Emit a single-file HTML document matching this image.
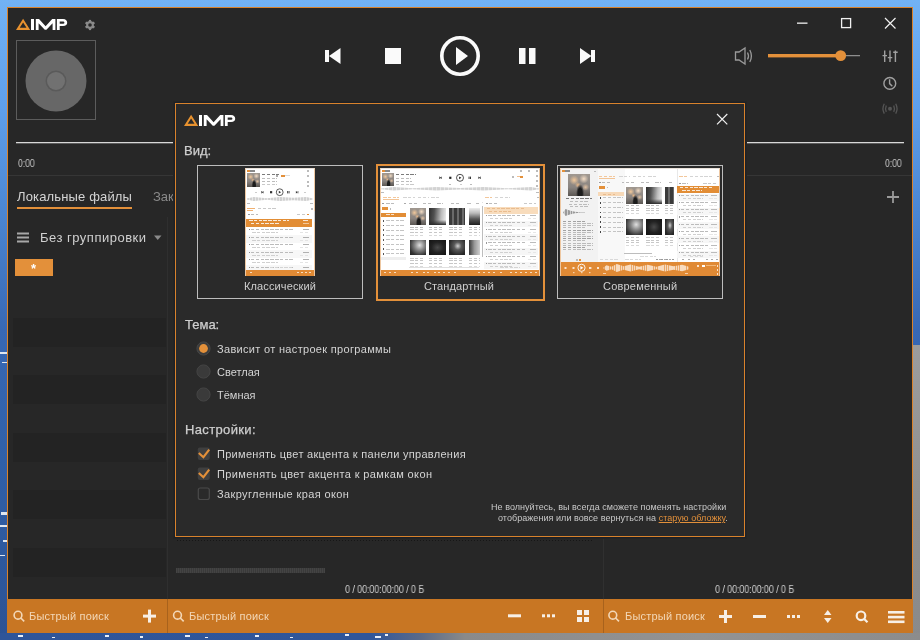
<!DOCTYPE html>
<html><head><meta charset="utf-8">
<style>
*{margin:0;padding:0;box-sizing:border-box}
html,body{width:920px;height:640px;overflow:hidden}
body{position:relative;font-family:"Liberation Sans",sans-serif;background:#4d87d6}
.a{position:absolute}
#bg{left:0;top:0;width:920px;height:640px;background:linear-gradient(180deg,#72b2f4 0px,#5e9eea 110px,#4882ce 230px,#3868b4 330px,#3060a8 460px,#2c5294 640px)}
#bgr{left:913px;top:345px;width:7px;height:295px;background:linear-gradient(180deg,#9c9c9c 0%,#8e8e8e 60%,#8a8a8a 100%)}
#bgb{left:0;top:633px;width:920px;height:7px;background:linear-gradient(90deg,#2f5599 0,#30569a 370px,#5a6a8a 420px,#8a8a8a 465px,#939393 700px,#8c8c8c 920px)}
#win{left:7px;top:7px;width:906px;height:626px;background:#272727;border:1px solid #d9822b}
.t{color:#d2d2d2;white-space:nowrap;position:absolute;will-change:transform}
.h{-webkit-text-stroke:0.25px currentColor}
</style></head><body>
<div class="a" id="bg"></div>
<div class="a" id="bgr"></div>
<div class="a" id="bgb"></div>
<svg class="a" style="left:0;top:0" width="7" height="640" fill="#dfe6f0"><rect x="0" y="352" width="7" height="2"/><rect x="2" y="362" width="5" height="1"/><rect x="1" y="512" width="6" height="3"/><rect x="0" y="525" width="7" height="2"/><rect x="3" y="540" width="4" height="2"/><rect x="0" y="555" width="5" height="1"/></svg>
<svg class="a" style="left:0;top:633px" width="920" height="7" fill="#e8eef8"><rect x="18" y="2" width="5" height="2"/><rect x="52" y="4" width="3" height="1"/><rect x="105" y="2" width="4" height="2"/><rect x="140" y="3" width="3" height="2"/><rect x="185" y="2" width="5" height="2"/><rect x="205" y="4" width="3" height="1"/><rect x="255" y="2" width="4" height="2"/><rect x="290" y="4" width="3" height="1"/><rect x="345" y="1" width="4" height="2"/><rect x="375" y="3" width="6" height="2"/><rect x="385" y="1" width="3" height="2"/></svg>
<div class="a" id="win"></div>

<!-- top-left logo -->
<svg class="a" style="left:0;top:0" width="920" height="640" viewBox="0 0 920 640">
  <!-- logo -->
  <path d="M16 30 L23.1 18.7 L30.2 30 Z M19.7 27.8 L26.5 27.8 L23.1 22.6 Z" fill="#e8922f" fill-rule="evenodd"/>
  <rect x="31" y="19" width="3" height="11" fill="#fff"/>
  <path d="M35.8 30 V19 H39 L45.6 26.2 L52.2 19 H55.4 V30 H52.6 V23.2 L46.4 29.8 H44.8 L38.6 23.2 V30 Z" fill="#fff"/>
  <path d="M56.9 30 V19 H63 C66 19 67.2 20.8 67.2 22.8 C67.2 24.8 66 26 63 26 H59.7 V30 Z M59.7 21.6 V23.8 H62.6 C63.9 23.8 64.4 23.4 64.4 22.7 C64.4 22 63.9 21.6 62.6 21.6 Z" fill="#fff" fill-rule="evenodd"/>
  <!-- gear -->
  <g transform="translate(90 25)" fill="#8a8a8a">
    <circle r="3.9"/>
    <rect x="-1.1" y="-5.1" width="2.2" height="10.2"/><rect x="-1.1" y="-5.1" width="2.2" height="10.2" transform="rotate(60)"/><rect x="-1.1" y="-5.1" width="2.2" height="10.2" transform="rotate(120)"/>
    <circle r="1.8" fill="#262626"/>
  </g>
  <!-- album art -->
  <rect x="16.5" y="40.5" width="79" height="79" fill="none" stroke="#5c5c5c" stroke-width="1"/>
  <circle cx="56" cy="81" r="30.5" fill="#676767"/>
  <circle cx="56" cy="81" r="10.5" fill="#5a5a5a"/>
  <circle cx="56" cy="81" r="9" fill="#717171"/>
  <!-- transport -->
  <rect x="325" y="50" width="4" height="12" fill="#fafafa"/>
  <path d="M340.5 48 V64 L329 56 Z" fill="#fafafa"/>
  <rect x="385" y="48" width="16" height="16" fill="#fafafa"/>
  <circle cx="460" cy="56" r="18.2" fill="none" stroke="#fafafa" stroke-width="3.6"/>
  <path d="M456 47 V65 L468 56 Z" fill="#fafafa"/>
  <rect x="519" y="48" width="6.5" height="16" fill="#fafafa"/>
  <rect x="529" y="48" width="6.5" height="16" fill="#fafafa"/>
  <path d="M580 48 V64 L591.5 56 Z" fill="#fafafa"/>
  <rect x="591" y="50" width="4" height="12" fill="#fafafa"/>
  <!-- window controls -->
  <rect x="797" y="22.5" width="10.5" height="1.3" fill="#f0f0f0"/>
  <rect x="841.6" y="18.6" width="9" height="9" fill="none" stroke="#f0f0f0" stroke-width="1.3"/>
  <path d="M885 18 L895.5 28.5 M895.5 18 L885 28.5" stroke="#f0f0f0" stroke-width="1.2"/>
  <!-- volume -->
  <path d="M735.5 52 H739 L745 48 V64 L739 60 H735.5 Z" fill="none" stroke="#9a9a9a" stroke-width="1.3"/>
  <path d="M747.5 52.5 Q749.5 56 747.5 59.5 M749.8 50 Q753 56 749.8 62" fill="none" stroke="#9a9a9a" stroke-width="1.3"/>
  <rect x="768" y="54" width="73" height="3.4" fill="#e3903a"/>
  <rect x="841" y="55.2" width="19" height="1" fill="#a8a8a8"/>
  <circle cx="840.7" cy="55.6" r="5.4" fill="#e3903a"/>
  <!-- right icons -->
  <g stroke="#a0a0a0" stroke-width="1.4" fill="none">
    <path d="M884.7 50.5 V62 M890 50.5 V62 M895.4 50.5 V62"/>
    <path d="M882.5 55.6 H887 M887.8 57.6 H892.3 M893.2 52.2 H897.7"/>
    <circle cx="889.8" cy="83.4" r="5.9"/>
    <path d="M889.6 79.3 V83.6 L892.3 86.2"/>
  </g>
  <g stroke="#555" stroke-width="1.3" fill="none">
    <path d="M886.3 105.5 Q884.8 108.7 886.3 111.9 M893.7 105.5 Q895.2 108.7 893.7 111.9"/>
    <path d="M884.3 103.8 Q881.6 108.7 884.3 113.6 M895.7 103.8 Q898.4 108.7 895.7 113.6"/>
  </g>
  <circle cx="890" cy="108.7" r="2" fill="#555"/>
  <!-- seek line -->
  <rect x="16" y="142" width="888" height="1.3" fill="#d8d8d8"/>
  <rect x="8" y="175" width="904" height="1" fill="#363636"/>
</svg>
<div class="t" style="left:18px;top:156.5px;font-size:10.5px;color:#c8c8c8;transform:scaleX(0.82);transform-origin:0 0">0:00</div>
<div class="t" style="left:884.5px;top:156.5px;font-size:10.5px;color:#c8c8c8;transform:scaleX(0.82);transform-origin:0 0">0:00</div>

<!-- main lower area -->
<div class="t" style="left:17px;top:189px;font-size:13px;letter-spacing:0.15px;color:#d4d4d4">Локальные файлы</div>
<div class="a" style="left:17px;top:207px;width:115px;height:2px;background:#e3903a"></div>
<div class="t" style="left:152.5px;top:189px;font-size:13px;color:#8a8a8a">Закладки</div>
<div class="a" style="left:13px;top:288.5px;width:153px;height:310.5px;background:repeating-linear-gradient(180deg,#272727 0px,#272727 28.5px,#232323 28.5px,#232323 57.5px)"></div>
<div class="a" style="left:167px;top:217px;width:1px;height:382px;background:#2f2f2f"></div>
<div class="a" style="left:603px;top:176px;width:1px;height:423px;background:#303030"></div>
<svg class="a" style="left:0;top:0" width="920" height="640">
  <rect x="17" y="232.5" width="12" height="2" fill="#a8a8a8"/>
  <rect x="17" y="236.5" width="12" height="2" fill="#a8a8a8"/>
  <rect x="17" y="240.5" width="12" height="2" fill="#a8a8a8"/>
  <path d="M154 235.5 H161.5 L157.75 240 Z" fill="#8a8a8a"/>
  <path d="M893 191 V203 M887 197 H899" stroke="#9a9a9a" stroke-width="1.8"/>
</svg>
<div class="t" style="left:39.5px;top:230px;font-size:13px;letter-spacing:0.5px;color:#d0d0d0">Без группировки</div>
<div class="a" style="left:15px;top:259px;width:38px;height:17px;background:#e3903a"></div>
<div class="t" style="left:31.3px;top:261px;font-size:13px;color:#fff;font-weight:bold">*</div>
<!-- dotted and progress -->
<div class="a" style="left:177px;top:540px;width:415px;height:1px;background:repeating-linear-gradient(90deg,#161616 0 1px,transparent 1px 3px)"></div>
<div class="a" style="left:176px;top:568px;width:149px;height:5px;background:repeating-linear-gradient(90deg,#444 0 1px,#3a3a3a 1px 2px)"></div>
<div class="t" style="left:345px;top:584px;font-size:10px;letter-spacing:-0.1px;color:#cfcfcf;transform:scaleX(0.9);transform-origin:0 0">0 / 00:00:00:00 / 0 Б</div>
<div class="t" style="left:715px;top:584px;font-size:10px;letter-spacing:-0.1px;color:#cfcfcf;transform:scaleX(0.9);transform-origin:0 0">0 / 00:00:00:00 / 0 Б</div>
<!-- bottom bar -->
<div class="a" style="left:7px;top:599px;width:906px;height:34px;background:#c87623"></div>
<div class="a" style="left:167px;top:599px;width:1px;height:34px;background:#a8621c"></div>
<div class="a" style="left:603px;top:599px;width:1px;height:34px;background:#a8621c"></div>
<div class="t" style="left:29.3px;top:609.5px;font-size:11px;letter-spacing:0.2px;color:#f3d8b8">Быстрый поиск</div>
<div class="t" style="left:189px;top:609.5px;font-size:11px;letter-spacing:0.2px;color:#f3d8b8">Быстрый поиск</div>
<div class="t" style="left:624.5px;top:609.5px;font-size:11px;letter-spacing:0.2px;color:#f3d8b8">Быстрый поиск</div>
<svg class="a" style="left:0;top:0" width="920" height="640">
  <g fill="none" stroke="#f3d8b8" stroke-width="1.6">
    <circle cx="18" cy="615.2" r="3.9"/><path d="M20.8 618 L24.2 621.4"/>
    <circle cx="177.5" cy="615.2" r="3.9"/><path d="M180.3 618 L183.7 621.4"/>
    <circle cx="612.8" cy="615.2" r="3.9"/><path d="M615.6 618 L619 621.4"/>
  </g>
  <g fill="#f7efe6">
    <rect x="143" y="614.6" width="13" height="3"/><rect x="148" y="609.6" width="3" height="13"/>
    <rect x="508" y="614.3" width="13" height="3"/>
    <rect x="542" y="614.3" width="3" height="3"/><rect x="547" y="614.3" width="3" height="3"/><rect x="552" y="614.3" width="3" height="3"/>
    <rect x="577" y="610" width="5" height="5"/><rect x="584" y="610" width="5" height="5"/><rect x="577" y="617" width="5" height="5"/><rect x="584" y="617" width="5" height="5"/>
    <rect x="719" y="615" width="13" height="3"/><rect x="724" y="610" width="3" height="13"/>
    <rect x="753" y="615" width="13" height="3"/>
    <rect x="787" y="615" width="3" height="3"/><rect x="792" y="615" width="3" height="3"/><rect x="797" y="615" width="3" height="3"/>
    <path d="M824 615 L827.75 610 L831.5 615 Z M824 618 L827.75 623 L831.5 618 Z"/>
    <rect x="888" y="611" width="16.5" height="2.6"/><rect x="888" y="615.8" width="16.5" height="2.6"/><rect x="888" y="620.5" width="16.5" height="2.6"/>
  </g>
  <g fill="none" stroke="#f7efe6" stroke-width="2.2">
    <circle cx="861" cy="615.8" r="4.3"/><path d="M864.2 619 L867.5 622.3"/>
  </g>
</svg>

<!-- marks under dialog top -->
<div class="a" style="left:386px;top:101.5px;width:2px;height:1.5px;background:#8a9099"></div>
<div class="a" style="left:389px;top:102px;width:8px;height:1px;background:#5a5f66"></div>
<div class="a" style="left:396.5px;top:101px;width:2.5px;height:2px;background:#9aa0a8"></div>
<div class="a" style="left:521px;top:102px;width:2px;height:1px;background:#8a9099"></div>
<div class="a" style="left:529px;top:102px;width:4px;height:1px;background:#c0c4ca"></div>
<!-- dialog -->
<div class="a" style="left:173px;top:101px;width:574px;height:438px;background:#242424"></div>
<div class="a" style="left:174px;top:102px;width:572px;height:436px;background:#1c2027"></div>
<div class="a" id="dlg" style="left:175px;top:103px;width:570px;height:434px;background:#2a2a2a;border:1px solid #d9822b"></div>
<svg class="a" style="left:0;top:0" width="920" height="640">
  <g transform="translate(168 96)">
  <path d="M16 30 L23.1 18.7 L30.2 30 Z M19.7 27.8 L26.5 27.8 L23.1 22.6 Z" fill="#e8922f" fill-rule="evenodd"/>
  <rect x="31" y="19" width="3" height="11" fill="#fff"/>
  <path d="M35.8 30 V19 H39 L45.6 26.2 L52.2 19 H55.4 V30 H52.6 V23.2 L46.4 29.8 H44.8 L38.6 23.2 V30 Z" fill="#fff"/>
  <path d="M56.9 30 V19 H63 C66 19 67.2 20.8 67.2 22.8 C67.2 24.8 66 26 63 26 H59.7 V30 Z M59.7 21.6 V23.8 H62.6 C63.9 23.8 64.4 23.4 64.4 22.7 C64.4 22 63.9 21.6 62.6 21.6 Z" fill="#fff" fill-rule="evenodd"/>
  </g>
  <path d="M717 114 L727.3 124.3 M727.3 114 L717 124.3" stroke="#f0f0f0" stroke-width="1.2"/>
  <!-- view boxes -->
  <rect x="197.5" y="165.5" width="165" height="133" fill="none" stroke="#bdbdbd" stroke-width="1"/>
  <rect x="377" y="165" width="167" height="135" fill="none" stroke="#e3903a" stroke-width="2"/>
  <rect x="557.5" y="165.5" width="165" height="133" fill="none" stroke="#bdbdbd" stroke-width="1"/>
</svg>
<!--THUMBS--><div class="a" style="left:245px;top:168px;width:70px;height:108px;background:#fff;border:1px solid #eec8a2;border-top-color:#e8e0d8"></div><div class="a" style="left:247px;top:170px;width:3px;height:2px;background:#e3903a;"></div><div class="a" style="left:250px;top:170.2px;width:5px;height:1.6px;background:#8a8a8a;"></div><div class="a" style="left:307px;top:169.5px;width:2px;height:2px;background:#bbb;"></div><div class="a" style="left:246.8px;top:172.6px;width:13.7px;height:14px;background:radial-gradient(ellipse 18% 42% at 55% 88%,#1c1c1c 0,#1c1c1c 55%,transparent 100%),radial-gradient(circle at 28% 28%,#f2c89a 0,transparent 22%),radial-gradient(circle at 72% 22%,#f3dcc4 0,transparent 20%),radial-gradient(circle at 45% 50%,#e8b888 0,transparent 18%),radial-gradient(circle at 80% 60%,#e0c0a0 0,transparent 16%),linear-gradient(180deg,#a09890 0,#8a8480 60%,#5a5652 100%);"></div><div class="a" style="left:262px;top:174px;width:17px;height:1.3px;background:repeating-linear-gradient(90deg,#7a7a7a 0 3.5px,transparent 3.5px 4.8px);"></div><div class="a" style="left:262px;top:178px;width:15px;height:1px;background:repeating-linear-gradient(90deg,#bcbcbc 0 3.5px,transparent 3.5px 4.8px);"></div><div class="a" style="left:262px;top:181px;width:15px;height:1px;background:repeating-linear-gradient(90deg,#bcbcbc 0 3.5px,transparent 3.5px 4.8px);"></div><div class="a" style="left:262px;top:184px;width:15px;height:1px;background:repeating-linear-gradient(90deg,#c9c9c9 0 3.5px,transparent 3.5px 4.8px);"></div><div class="a" style="left:276px;top:174.5px;width:2px;height:2px;background:#aaa;"></div><div class="a" style="left:281px;top:175px;width:4px;height:1.5px;background:#e3903a;"></div><div class="a" style="left:285px;top:175px;width:5px;height:1px;background:#ddd;"></div><div class="a" style="left:307px;top:174.5px;width:2px;height:2px;background:#bbb;"></div><div class="a" style="left:307px;top:180.5px;width:2px;height:2px;background:#bbb;"></div><div class="a" style="left:307px;top:184.5px;width:2px;height:2px;background:#bbb;"></div><svg class="a" style="left:0;top:0" width="920" height="640"><circle cx="279.7" cy="192.2" r="3.4" fill="none" stroke="#333" stroke-width="0.8"/><path d="M278.8 190.79999999999998 V193.6 L281.09999999999997 192.2Z" fill="#333"/><path d="M263.5 191.0 V193.39999999999998 L261.7 192.2Z" fill="#333"/><rect x="261.2" y="191.0" width="0.6" height="2.4" fill="#333"/><rect x="269.99999999999994" y="191.1" width="2.2" height="2.2" fill="#333"/><rect x="287.2" y="191.0" width="0.9" height="2.4" fill="#333"/><rect x="288.6" y="191.0" width="0.9" height="2.4" fill="#333"/><path d="M295.9 191.0 V193.39999999999998 L297.7 192.2Z" fill="#333"/><rect x="297.7" y="191.0" width="0.6" height="2.4" fill="#333"/></svg><div class="a" style="left:255px;top:191.5px;width:1.5px;height:1.5px;background:#ccc;"></div><div class="a" style="left:304px;top:191.5px;width:1.5px;height:1.5px;background:#ccc;"></div><div class="a" style="left:247px;top:197px;width:66px;height:4px;background:repeating-linear-gradient(90deg,#d0d0d0 0 2px,#e8e8e8 2px 3px);clip-path:polygon(0 40%,10% 0,30% 30%,50% 0,70% 20%,90% 0,100% 40%,100% 60%,90% 100%,70% 80%,50% 100%,30% 70%,10% 100%,0 60%)"></div><div class="a" style="left:247px;top:203px;width:3px;height:1px;background:#bbb;"></div><div class="a" style="left:310px;top:203px;width:3px;height:1px;background:#bbb;"></div><div class="a" style="left:247px;top:207.5px;width:8px;height:1px;background:#f0b070;"></div><div class="a" style="left:247px;top:209.5px;width:6px;height:1px;background:#f0b070;"></div><div class="a" style="left:258px;top:208px;width:18px;height:1px;background:repeating-linear-gradient(90deg,#c9c9c9 0 3.5px,transparent 3.5px 4.8px);"></div><div class="a" style="left:311px;top:208px;width:2px;height:1.5px;background:#bbb;"></div><div class="a" style="left:248px;top:213.5px;width:2px;height:1.5px;background:#999;"></div><div class="a" style="left:251px;top:213.5px;width:7px;height:1px;background:repeating-linear-gradient(90deg,#bcbcbc 0 3.5px,transparent 3.5px 4.8px);"></div><div class="a" style="left:297px;top:213.5px;width:10px;height:1px;background:repeating-linear-gradient(90deg,#c9c9c9 0 3.5px,transparent 3.5px 4.8px);"></div><div class="a" style="left:307px;top:213.5px;width:2px;height:1px;background:#e3903a;"></div><div class="a" style="left:246px;top:218.5px;width:66px;height:8.2px;background:#e28d35;"></div><div class="a" style="left:249px;top:220px;width:40px;height:1px;background:repeating-linear-gradient(90deg,#f9ebdd 0 3.5px,transparent 3.5px 4.8px);"></div><div class="a" style="left:251px;top:223px;width:28px;height:1px;background:repeating-linear-gradient(90deg,#f9ebdd 0 3.5px,transparent 3.5px 4.8px);"></div><div class="a" style="left:303px;top:220px;width:5px;height:1px;background:#f8e6d4;"></div><div class="a" style="left:303px;top:223px;width:6px;height:1px;background:#f5c898;"></div><div class="a" style="left:248.5px;top:229.0px;width:1.2px;height:1.3px;background:#888;"></div><div class="a" style="left:251px;top:229.0px;width:42px;height:1px;background:repeating-linear-gradient(90deg,#bbbbbb 0 3.5px,transparent 3.5px 4.8px);"></div><div class="a" style="left:252px;top:232.0px;width:26px;height:1px;background:repeating-linear-gradient(90deg,#d0d0d0 0 3.5px,transparent 3.5px 4.8px);"></div><div class="a" style="left:303px;top:229.0px;width:6px;height:1px;background:#b0b0b0;"></div><div class="a" style="left:300px;top:232.0px;width:9px;height:1px;background:repeating-linear-gradient(90deg,#e4e4e4 0 3.5px,transparent 3.5px 4.8px);"></div><div class="a" style="left:246px;top:235.05px;width:66px;height:7.5px;background:#f7f7f7;"></div><div class="a" style="left:248.5px;top:236.55px;width:1.2px;height:1.3px;background:#888;"></div><div class="a" style="left:251px;top:236.55px;width:42px;height:1px;background:repeating-linear-gradient(90deg,#bbbbbb 0 3.5px,transparent 3.5px 4.8px);"></div><div class="a" style="left:252px;top:239.55px;width:26px;height:1px;background:repeating-linear-gradient(90deg,#d0d0d0 0 3.5px,transparent 3.5px 4.8px);"></div><div class="a" style="left:303px;top:236.55px;width:6px;height:1px;background:#b0b0b0;"></div><div class="a" style="left:300px;top:239.55px;width:9px;height:1px;background:repeating-linear-gradient(90deg,#e4e4e4 0 3.5px,transparent 3.5px 4.8px);"></div><div class="a" style="left:248.5px;top:244.1px;width:1.2px;height:1.3px;background:#888;"></div><div class="a" style="left:251px;top:244.1px;width:42px;height:1px;background:repeating-linear-gradient(90deg,#bbbbbb 0 3.5px,transparent 3.5px 4.8px);"></div><div class="a" style="left:252px;top:247.1px;width:26px;height:1px;background:repeating-linear-gradient(90deg,#d0d0d0 0 3.5px,transparent 3.5px 4.8px);"></div><div class="a" style="left:303px;top:244.1px;width:6px;height:1px;background:#b0b0b0;"></div><div class="a" style="left:300px;top:247.1px;width:9px;height:1px;background:repeating-linear-gradient(90deg,#e4e4e4 0 3.5px,transparent 3.5px 4.8px);"></div><div class="a" style="left:246px;top:250.15px;width:66px;height:7.5px;background:#f7f7f7;"></div><div class="a" style="left:248.5px;top:251.65px;width:1.2px;height:1.3px;background:#888;"></div><div class="a" style="left:251px;top:251.65px;width:42px;height:1px;background:repeating-linear-gradient(90deg,#bbbbbb 0 3.5px,transparent 3.5px 4.8px);"></div><div class="a" style="left:252px;top:254.65px;width:26px;height:1px;background:repeating-linear-gradient(90deg,#d0d0d0 0 3.5px,transparent 3.5px 4.8px);"></div><div class="a" style="left:303px;top:251.65px;width:6px;height:1px;background:#b0b0b0;"></div><div class="a" style="left:300px;top:254.65px;width:9px;height:1px;background:repeating-linear-gradient(90deg,#e4e4e4 0 3.5px,transparent 3.5px 4.8px);"></div><div class="a" style="left:248.5px;top:259.2px;width:1.2px;height:1.3px;background:#888;"></div><div class="a" style="left:251px;top:259.2px;width:42px;height:1px;background:repeating-linear-gradient(90deg,#bbbbbb 0 3.5px,transparent 3.5px 4.8px);"></div><div class="a" style="left:252px;top:262.2px;width:26px;height:1px;background:repeating-linear-gradient(90deg,#d0d0d0 0 3.5px,transparent 3.5px 4.8px);"></div><div class="a" style="left:303px;top:259.2px;width:6px;height:1px;background:#b0b0b0;"></div><div class="a" style="left:300px;top:262.2px;width:9px;height:1px;background:repeating-linear-gradient(90deg,#e4e4e4 0 3.5px,transparent 3.5px 4.8px);"></div><div class="a" style="left:246px;top:265.25px;width:66px;height:7.5px;background:#f7f7f7;"></div><div class="a" style="left:248.5px;top:266.75px;width:1.2px;height:1.3px;background:#888;"></div><div class="a" style="left:251px;top:266.75px;width:42px;height:1px;background:repeating-linear-gradient(90deg,#bbbbbb 0 3.5px,transparent 3.5px 4.8px);"></div><div class="a" style="left:252px;top:269.75px;width:26px;height:1px;background:repeating-linear-gradient(90deg,#d0d0d0 0 3.5px,transparent 3.5px 4.8px);"></div><div class="a" style="left:303px;top:266.75px;width:6px;height:1px;background:#b0b0b0;"></div><div class="a" style="left:300px;top:269.75px;width:9px;height:1px;background:repeating-linear-gradient(90deg,#e4e4e4 0 3.5px,transparent 3.5px 4.8px);"></div><div class="a" style="left:313.5px;top:211px;width:1px;height:11px;background:#cfcfcf;"></div><div class="a" style="left:270px;top:267px;width:22px;height:1px;background:repeating-linear-gradient(90deg,#d4d4d4 0 3.5px,transparent 3.5px 4.8px);"></div><div class="a" style="left:246px;top:270px;width:68px;height:5.5px;background:#e08a35;"></div><div class="a" style="left:250px;top:272px;width:2px;height:1.3px;background:#f6dcc0;"></div><div class="a" style="left:297px;top:272px;width:2px;height:1.3px;background:#f6dcc0;"></div><div class="a" style="left:301px;top:272px;width:2px;height:1.3px;background:#f6dcc0;"></div><div class="a" style="left:305px;top:272px;width:2px;height:1.3px;background:#f6dcc0;"></div><div class="a" style="left:309px;top:272px;width:2px;height:1.3px;background:#f6dcc0;"></div><div class="a" style="left:380px;top:168px;width:160px;height:108px;background:#fff;border:1px solid #eec8a2;border-top-color:#e8e0d8"></div><div class="a" style="left:382px;top:170px;width:3px;height:2px;background:#e3903a;"></div><div class="a" style="left:385px;top:170.2px;width:5px;height:1.6px;background:#8a8a8a;"></div><div class="a" style="left:520px;top:170px;width:2px;height:1.5px;background:#bbb;"></div><div class="a" style="left:528px;top:170px;width:2px;height:1.5px;background:#bbb;"></div><div class="a" style="left:536px;top:170px;width:2px;height:1.5px;background:#bbb;"></div><div class="a" style="left:381.5px;top:173px;width:12.5px;height:12.6px;background:radial-gradient(ellipse 18% 42% at 55% 88%,#1c1c1c 0,#1c1c1c 55%,transparent 100%),radial-gradient(circle at 28% 28%,#f2c89a 0,transparent 22%),radial-gradient(circle at 72% 22%,#f3dcc4 0,transparent 20%),radial-gradient(circle at 45% 50%,#e8b888 0,transparent 18%),radial-gradient(circle at 80% 60%,#e0c0a0 0,transparent 16%),linear-gradient(180deg,#a09890 0,#8a8480 60%,#5a5652 100%);"></div><div class="a" style="left:396px;top:174px;width:20px;height:1.3px;background:repeating-linear-gradient(90deg,#7a7a7a 0 3.5px,transparent 3.5px 4.8px);"></div><div class="a" style="left:396px;top:177.5px;width:15px;height:1px;background:repeating-linear-gradient(90deg,#bcbcbc 0 3.5px,transparent 3.5px 4.8px);"></div><div class="a" style="left:396px;top:180.5px;width:16px;height:1px;background:repeating-linear-gradient(90deg,#bcbcbc 0 3.5px,transparent 3.5px 4.8px);"></div><div class="a" style="left:396px;top:183.5px;width:18px;height:1px;background:repeating-linear-gradient(90deg,#c9c9c9 0 3.5px,transparent 3.5px 4.8px);"></div><svg class="a" style="left:0;top:0" width="920" height="640"><circle cx="460" cy="177.8" r="3.5" fill="none" stroke="#222" stroke-width="0.8"/><path d="M459.1 176.4 V179.20000000000002 L461.4 177.8Z" fill="#222"/><path d="M441.6 176.60000000000002 V179.0 L439.8 177.8Z" fill="#222"/><rect x="439.3" y="176.60000000000002" width="0.6" height="2.4" fill="#222"/><rect x="449.2" y="176.70000000000002" width="2.2" height="2.2" fill="#222"/><rect x="468.59999999999997" y="176.60000000000002" width="0.9" height="2.4" fill="#222"/><rect x="470.0" y="176.60000000000002" width="0.9" height="2.4" fill="#222"/><path d="M478.4 176.60000000000002 V179.0 L480.2 177.8Z" fill="#222"/><rect x="480.2" y="176.60000000000002" width="0.6" height="2.4" fill="#222"/></svg><div class="a" style="left:449px;top:183.5px;width:1.5px;height:1.5px;background:#bbb;"></div><div class="a" style="left:459.5px;top:183.8px;width:2px;height:1px;background:#ccc;"></div><div class="a" style="left:470px;top:183.5px;width:1.5px;height:1.5px;background:#bbb;"></div><div class="a" style="left:512px;top:175.5px;width:2px;height:2px;background:#bbb;"></div><div class="a" style="left:517px;top:176px;width:3px;height:1.3px;background:#f2c090;"></div><div class="a" style="left:520px;top:175.5px;width:3px;height:2px;background:#e3903a;"></div><div class="a" style="left:536px;top:175px;width:2px;height:1.5px;background:#bbb;"></div><div class="a" style="left:536px;top:180px;width:2px;height:1.5px;background:#bbb;"></div><div class="a" style="left:536px;top:185px;width:2px;height:1.5px;background:#bbb;"></div><div class="a" style="left:381px;top:187px;width:158px;height:3.6px;background:repeating-linear-gradient(90deg,#d2d2d2 0 3px,#e6e6e6 3px 4px);clip-path:polygon(0 40%,8% 0,20% 35%,35% 0,50% 30%,65% 0,80% 35%,95% 0,100% 40%,100% 60%,95% 100%,80% 65%,65% 100%,50% 70%,35% 100%,20% 65%,8% 100%,0 60%)"></div><div class="a" style="left:381px;top:191.5px;width:3px;height:1px;background:#bbb;"></div><div class="a" style="left:536px;top:191.5px;width:3px;height:1px;background:#bbb;"></div><div class="a" style="left:383px;top:197px;width:16px;height:1px;background:repeating-linear-gradient(90deg,#f3c79b 0 3.5px,transparent 3.5px 4.8px);"></div><div class="a" style="left:383px;top:199.2px;width:16px;height:0.8px;background:#f2c496;"></div><div class="a" style="left:403px;top:197px;width:12px;height:1px;background:repeating-linear-gradient(90deg,#d4d4d4 0 3.5px,transparent 3.5px 4.8px);"></div><div class="a" style="left:418px;top:197px;width:11px;height:1px;background:repeating-linear-gradient(90deg,#d4d4d4 0 3.5px,transparent 3.5px 4.8px);"></div><div class="a" style="left:431px;top:197px;width:9px;height:1px;background:repeating-linear-gradient(90deg,#d4d4d4 0 3.5px,transparent 3.5px 4.8px);"></div><div class="a" style="left:485px;top:197px;width:7px;height:1px;background:repeating-linear-gradient(90deg,#f3c79b 0 3.5px,transparent 3.5px 4.8px);"></div><div class="a" style="left:495px;top:197px;width:15px;height:1px;background:repeating-linear-gradient(90deg,#d4d4d4 0 3.5px,transparent 3.5px 4.8px);"></div><div class="a" style="left:537px;top:197px;width:2px;height:1.2px;background:#bbb;"></div><div class="a" style="left:482px;top:202px;width:1px;height:1px;background:#e0e0e0;"></div><div class="a" style="left:382px;top:203px;width:2px;height:1.2px;background:#999;"></div><div class="a" style="left:386px;top:203px;width:8px;height:1px;background:repeating-linear-gradient(90deg,#bcbcbc 0 3.5px,transparent 3.5px 4.8px);"></div><div class="a" style="left:404px;top:203px;width:2px;height:1px;background:#aaa;"></div><div class="a" style="left:409px;top:203px;width:8px;height:1px;background:repeating-linear-gradient(90deg,#bcbcbc 0 3.5px,transparent 3.5px 4.8px);"></div><div class="a" style="left:423px;top:203px;width:10px;height:1px;background:repeating-linear-gradient(90deg,#bcbcbc 0 3.5px,transparent 3.5px 4.8px);"></div><div class="a" style="left:437px;top:203px;width:6px;height:1px;background:repeating-linear-gradient(90deg,#bcbcbc 0 3.5px,transparent 3.5px 4.8px);"></div><div class="a" style="left:451px;top:203px;width:8px;height:1px;background:repeating-linear-gradient(90deg,#bcbcbc 0 3.5px,transparent 3.5px 4.8px);"></div><div class="a" style="left:467px;top:203px;width:5px;height:1px;background:repeating-linear-gradient(90deg,#bcbcbc 0 3.5px,transparent 3.5px 4.8px);"></div><div class="a" style="left:476px;top:203px;width:3px;height:1px;background:repeating-linear-gradient(90deg,#bcbcbc 0 3.5px,transparent 3.5px 4.8px);"></div><div class="a" style="left:382px;top:207px;width:6px;height:3px;background:#e3903a;"></div><div class="a" style="left:390px;top:208px;width:1px;height:1.5px;background:#bbb;"></div><div class="a" style="left:381px;top:212.5px;width:25px;height:4.5px;background:#e28d35;"></div><div class="a" style="left:386px;top:214px;width:10px;height:1px;background:repeating-linear-gradient(90deg,#f9e3cd 0 3.5px,transparent 3.5px 4.8px);"></div><div class="a" style="left:382.5px;top:220.0px;width:1.8px;height:1.8px;background:#555;"></div><div class="a" style="left:386px;top:220.4px;width:19px;height:1px;background:repeating-linear-gradient(90deg,#c4c4c4 0 3.5px,transparent 3.5px 4.8px);"></div><div class="a" style="left:382.5px;top:224.7px;width:1.8px;height:1.8px;background:#555;"></div><div class="a" style="left:386px;top:225.1px;width:19px;height:1px;background:repeating-linear-gradient(90deg,#c4c4c4 0 3.5px,transparent 3.5px 4.8px);"></div><div class="a" style="left:382.5px;top:229.4px;width:1.8px;height:1.8px;background:#555;"></div><div class="a" style="left:386px;top:229.8px;width:19px;height:1px;background:repeating-linear-gradient(90deg,#c4c4c4 0 3.5px,transparent 3.5px 4.8px);"></div><div class="a" style="left:382.5px;top:234.1px;width:1.8px;height:1.8px;background:#555;"></div><div class="a" style="left:386px;top:234.5px;width:19px;height:1px;background:repeating-linear-gradient(90deg,#c4c4c4 0 3.5px,transparent 3.5px 4.8px);"></div><div class="a" style="left:382.5px;top:238.8px;width:1.8px;height:1.8px;background:#555;"></div><div class="a" style="left:386px;top:239.20000000000002px;width:19px;height:1px;background:repeating-linear-gradient(90deg,#c4c4c4 0 3.5px,transparent 3.5px 4.8px);"></div><div class="a" style="left:382.5px;top:243.5px;width:1.8px;height:1.8px;background:#555;"></div><div class="a" style="left:386px;top:243.9px;width:19px;height:1px;background:repeating-linear-gradient(90deg,#c4c4c4 0 3.5px,transparent 3.5px 4.8px);"></div><div class="a" style="left:382.5px;top:248.2px;width:1.8px;height:1.8px;background:#555;"></div><div class="a" style="left:386px;top:248.6px;width:19px;height:1px;background:repeating-linear-gradient(90deg,#c4c4c4 0 3.5px,transparent 3.5px 4.8px);"></div><div class="a" style="left:382.5px;top:252.9px;width:1.8px;height:1.8px;background:#555;"></div><div class="a" style="left:386px;top:253.3px;width:19px;height:1px;background:repeating-linear-gradient(90deg,#c4c4c4 0 3.5px,transparent 3.5px 4.8px);"></div><div class="a" style="left:381px;top:257px;width:25px;height:3px;background:#eee;"></div><div class="a" style="left:409.5px;top:208px;width:16.5px;height:16.6px;background:radial-gradient(ellipse 18% 42% at 55% 88%,#1c1c1c 0,#1c1c1c 55%,transparent 100%),radial-gradient(circle at 28% 28%,#f2c89a 0,transparent 22%),radial-gradient(circle at 72% 22%,#f3dcc4 0,transparent 20%),radial-gradient(circle at 45% 50%,#e8b888 0,transparent 18%),radial-gradient(circle at 80% 60%,#e0c0a0 0,transparent 16%),linear-gradient(180deg,#a09890 0,#8a8480 60%,#5a5652 100%);"></div><div class="a" style="left:409.5px;top:239.8px;width:16.5px;height:15.7px;background:radial-gradient(ellipse at 60% 35%,#e0e0e0 0,#8a8a8a 35%,#333 75%,#222 100%);"></div><div class="a" style="left:409.5px;top:226.5px;width:14px;height:1px;background:repeating-linear-gradient(90deg,#bcbcbc 0 3.5px,transparent 3.5px 4.8px);"></div><div class="a" style="left:409.5px;top:229.3px;width:14px;height:1px;background:repeating-linear-gradient(90deg,#c7c7c7 0 3.5px,transparent 3.5px 4.8px);"></div><div class="a" style="left:409.5px;top:232.1px;width:14px;height:1px;background:repeating-linear-gradient(90deg,#c7c7c7 0 3.5px,transparent 3.5px 4.8px);"></div><div class="a" style="left:409.5px;top:234.9px;width:14px;height:1px;background:repeating-linear-gradient(90deg,#dadada 0 3.5px,transparent 3.5px 4.8px);"></div><div class="a" style="left:409.5px;top:257.5px;width:14px;height:1px;background:repeating-linear-gradient(90deg,#c9c9c9 0 3.5px,transparent 3.5px 4.8px);"></div><div class="a" style="left:409.5px;top:260.3px;width:14px;height:1px;background:repeating-linear-gradient(90deg,#c7c7c7 0 3.5px,transparent 3.5px 4.8px);"></div><div class="a" style="left:409.5px;top:263.1px;width:14px;height:1px;background:repeating-linear-gradient(90deg,#c7c7c7 0 3.5px,transparent 3.5px 4.8px);"></div><div class="a" style="left:409.5px;top:265.9px;width:14px;height:1px;background:repeating-linear-gradient(90deg,#dadada 0 3.5px,transparent 3.5px 4.8px);"></div><div class="a" style="left:429px;top:208px;width:16.7px;height:16.6px;background:linear-gradient(180deg,transparent 70%,#2a2a2a 100%),linear-gradient(95deg,#2e2e2e 0,#505050 30%,#bdbdbd 70%,#eeeeee 100%);"></div><div class="a" style="left:429px;top:239.8px;width:16.7px;height:15.7px;background:radial-gradient(ellipse at 50% 50%,#4a4a4a 0,#222 50%,#121212 100%);"></div><div class="a" style="left:429px;top:226.5px;width:14px;height:1px;background:repeating-linear-gradient(90deg,#bcbcbc 0 3.5px,transparent 3.5px 4.8px);"></div><div class="a" style="left:429px;top:229.3px;width:14px;height:1px;background:repeating-linear-gradient(90deg,#c7c7c7 0 3.5px,transparent 3.5px 4.8px);"></div><div class="a" style="left:429px;top:232.1px;width:14px;height:1px;background:repeating-linear-gradient(90deg,#c7c7c7 0 3.5px,transparent 3.5px 4.8px);"></div><div class="a" style="left:429px;top:234.9px;width:14px;height:1px;background:repeating-linear-gradient(90deg,#dadada 0 3.5px,transparent 3.5px 4.8px);"></div><div class="a" style="left:429px;top:257.5px;width:14px;height:1px;background:repeating-linear-gradient(90deg,#c9c9c9 0 3.5px,transparent 3.5px 4.8px);"></div><div class="a" style="left:429px;top:260.3px;width:14px;height:1px;background:repeating-linear-gradient(90deg,#c7c7c7 0 3.5px,transparent 3.5px 4.8px);"></div><div class="a" style="left:429px;top:263.1px;width:14px;height:1px;background:repeating-linear-gradient(90deg,#c7c7c7 0 3.5px,transparent 3.5px 4.8px);"></div><div class="a" style="left:429px;top:265.9px;width:14px;height:1px;background:repeating-linear-gradient(90deg,#dadada 0 3.5px,transparent 3.5px 4.8px);"></div><div class="a" style="left:448.5px;top:208px;width:16.5px;height:16.6px;background:repeating-linear-gradient(90deg,#3a3a3a 0 3px,#6a6a6a 3px 5px),linear-gradient(#555,#333);"></div><div class="a" style="left:448.5px;top:239.8px;width:16.5px;height:15.7px;background:radial-gradient(ellipse at 55% 40%,#d0d0d0 0,#5a5a5a 30%,#262626 75%);"></div><div class="a" style="left:448.5px;top:226.5px;width:14px;height:1px;background:repeating-linear-gradient(90deg,#bcbcbc 0 3.5px,transparent 3.5px 4.8px);"></div><div class="a" style="left:448.5px;top:229.3px;width:14px;height:1px;background:repeating-linear-gradient(90deg,#c7c7c7 0 3.5px,transparent 3.5px 4.8px);"></div><div class="a" style="left:448.5px;top:232.1px;width:14px;height:1px;background:repeating-linear-gradient(90deg,#c7c7c7 0 3.5px,transparent 3.5px 4.8px);"></div><div class="a" style="left:448.5px;top:234.9px;width:14px;height:1px;background:repeating-linear-gradient(90deg,#dadada 0 3.5px,transparent 3.5px 4.8px);"></div><div class="a" style="left:448.5px;top:257.5px;width:14px;height:1px;background:repeating-linear-gradient(90deg,#c9c9c9 0 3.5px,transparent 3.5px 4.8px);"></div><div class="a" style="left:448.5px;top:260.3px;width:14px;height:1px;background:repeating-linear-gradient(90deg,#c7c7c7 0 3.5px,transparent 3.5px 4.8px);"></div><div class="a" style="left:448.5px;top:263.1px;width:14px;height:1px;background:repeating-linear-gradient(90deg,#c7c7c7 0 3.5px,transparent 3.5px 4.8px);"></div><div class="a" style="left:448.5px;top:265.9px;width:14px;height:1px;background:repeating-linear-gradient(90deg,#dadada 0 3.5px,transparent 3.5px 4.8px);"></div><div class="a" style="left:468.5px;top:208px;width:11.5px;height:16.6px;background:linear-gradient(180deg,#eeeeee 0,#bbbbbb 30%,#555 65%,#1e1e1e 100%);"></div><div class="a" style="left:468.5px;top:239.8px;width:11.5px;height:15.7px;background:linear-gradient(90deg,#3a3a3a 0,#999 50%,#d0d0d0 100%);"></div><div class="a" style="left:468.5px;top:226.5px;width:11.5px;height:1px;background:repeating-linear-gradient(90deg,#bcbcbc 0 3.5px,transparent 3.5px 4.8px);"></div><div class="a" style="left:468.5px;top:229.3px;width:11.5px;height:1px;background:repeating-linear-gradient(90deg,#c7c7c7 0 3.5px,transparent 3.5px 4.8px);"></div><div class="a" style="left:468.5px;top:232.1px;width:11.5px;height:1px;background:repeating-linear-gradient(90deg,#c7c7c7 0 3.5px,transparent 3.5px 4.8px);"></div><div class="a" style="left:468.5px;top:234.9px;width:11.5px;height:1px;background:repeating-linear-gradient(90deg,#dadada 0 3.5px,transparent 3.5px 4.8px);"></div><div class="a" style="left:468.5px;top:257.5px;width:11.5px;height:1px;background:repeating-linear-gradient(90deg,#c9c9c9 0 3.5px,transparent 3.5px 4.8px);"></div><div class="a" style="left:468.5px;top:260.3px;width:11.5px;height:1px;background:repeating-linear-gradient(90deg,#c7c7c7 0 3.5px,transparent 3.5px 4.8px);"></div><div class="a" style="left:468.5px;top:263.1px;width:11.5px;height:1px;background:repeating-linear-gradient(90deg,#c7c7c7 0 3.5px,transparent 3.5px 4.8px);"></div><div class="a" style="left:468.5px;top:265.9px;width:11.5px;height:1px;background:repeating-linear-gradient(90deg,#dadada 0 3.5px,transparent 3.5px 4.8px);"></div><div class="a" style="left:481.5px;top:206px;width:1px;height:51px;background:#bdbdbd;"></div><div class="a" style="left:409px;top:266.5px;width:70px;height:1px;background:#e0e0e0;"></div><div class="a" style="left:484px;top:207px;width:54px;height:6.6px;background:#f8dcbc;"></div><div class="a" style="left:487px;top:208.2px;width:38px;height:1px;background:repeating-linear-gradient(90deg,#e9bc8f 0 3.5px,transparent 3.5px 4.8px);"></div><div class="a" style="left:489px;top:211px;width:22px;height:1px;background:repeating-linear-gradient(90deg,#e9bc8f 0 3.5px,transparent 3.5px 4.8px);"></div><div class="a" style="left:486px;top:203px;width:2px;height:1.2px;background:#999;"></div><div class="a" style="left:489px;top:203px;width:8px;height:1px;background:repeating-linear-gradient(90deg,#bcbcbc 0 3.5px,transparent 3.5px 4.8px);"></div><div class="a" style="left:524px;top:203px;width:12px;height:1px;background:repeating-linear-gradient(90deg,#c9c9c9 0 3.5px,transparent 3.5px 4.8px);"></div><div class="a" style="left:486px;top:215.0px;width:1px;height:1.2px;background:#999;"></div><div class="a" style="left:488px;top:215.0px;width:38px;height:1px;background:repeating-linear-gradient(90deg,#bbbbbb 0 3.5px,transparent 3.5px 4.8px);"></div><div class="a" style="left:490px;top:218.0px;width:22px;height:1px;background:repeating-linear-gradient(90deg,#d0d0d0 0 3.5px,transparent 3.5px 4.8px);"></div><div class="a" style="left:530px;top:215.0px;width:6px;height:1px;background:#bbb;"></div><div class="a" style="left:528px;top:218.0px;width:8px;height:1px;background:repeating-linear-gradient(90deg,#e6e6e6 0 3.5px,transparent 3.5px 4.8px);"></div><div class="a" style="left:484px;top:220.65px;width:54px;height:6.8px;background:#f6f6f6;"></div><div class="a" style="left:486px;top:221.85px;width:1px;height:1.2px;background:#999;"></div><div class="a" style="left:488px;top:221.85px;width:38px;height:1px;background:repeating-linear-gradient(90deg,#bbbbbb 0 3.5px,transparent 3.5px 4.8px);"></div><div class="a" style="left:490px;top:224.85px;width:22px;height:1px;background:repeating-linear-gradient(90deg,#d0d0d0 0 3.5px,transparent 3.5px 4.8px);"></div><div class="a" style="left:530px;top:221.85px;width:6px;height:1px;background:#bbb;"></div><div class="a" style="left:528px;top:224.85px;width:8px;height:1px;background:repeating-linear-gradient(90deg,#e6e6e6 0 3.5px,transparent 3.5px 4.8px);"></div><div class="a" style="left:486px;top:228.7px;width:1px;height:1.2px;background:#999;"></div><div class="a" style="left:488px;top:228.7px;width:38px;height:1px;background:repeating-linear-gradient(90deg,#bbbbbb 0 3.5px,transparent 3.5px 4.8px);"></div><div class="a" style="left:490px;top:231.7px;width:22px;height:1px;background:repeating-linear-gradient(90deg,#d0d0d0 0 3.5px,transparent 3.5px 4.8px);"></div><div class="a" style="left:530px;top:228.7px;width:6px;height:1px;background:#bbb;"></div><div class="a" style="left:528px;top:231.7px;width:8px;height:1px;background:repeating-linear-gradient(90deg,#e6e6e6 0 3.5px,transparent 3.5px 4.8px);"></div><div class="a" style="left:484px;top:234.35000000000002px;width:54px;height:6.8px;background:#f6f6f6;"></div><div class="a" style="left:486px;top:235.55px;width:1px;height:1.2px;background:#999;"></div><div class="a" style="left:488px;top:235.55px;width:38px;height:1px;background:repeating-linear-gradient(90deg,#bbbbbb 0 3.5px,transparent 3.5px 4.8px);"></div><div class="a" style="left:490px;top:238.55px;width:22px;height:1px;background:repeating-linear-gradient(90deg,#d0d0d0 0 3.5px,transparent 3.5px 4.8px);"></div><div class="a" style="left:530px;top:235.55px;width:6px;height:1px;background:#bbb;"></div><div class="a" style="left:528px;top:238.55px;width:8px;height:1px;background:repeating-linear-gradient(90deg,#e6e6e6 0 3.5px,transparent 3.5px 4.8px);"></div><div class="a" style="left:486px;top:242.4px;width:1px;height:1.2px;background:#999;"></div><div class="a" style="left:488px;top:242.4px;width:38px;height:1px;background:repeating-linear-gradient(90deg,#bbbbbb 0 3.5px,transparent 3.5px 4.8px);"></div><div class="a" style="left:490px;top:245.4px;width:22px;height:1px;background:repeating-linear-gradient(90deg,#d0d0d0 0 3.5px,transparent 3.5px 4.8px);"></div><div class="a" style="left:530px;top:242.4px;width:6px;height:1px;background:#bbb;"></div><div class="a" style="left:528px;top:245.4px;width:8px;height:1px;background:repeating-linear-gradient(90deg,#e6e6e6 0 3.5px,transparent 3.5px 4.8px);"></div><div class="a" style="left:484px;top:248.05px;width:54px;height:6.8px;background:#f6f6f6;"></div><div class="a" style="left:486px;top:249.25px;width:1px;height:1.2px;background:#999;"></div><div class="a" style="left:488px;top:249.25px;width:38px;height:1px;background:repeating-linear-gradient(90deg,#bbbbbb 0 3.5px,transparent 3.5px 4.8px);"></div><div class="a" style="left:490px;top:252.25px;width:22px;height:1px;background:repeating-linear-gradient(90deg,#d0d0d0 0 3.5px,transparent 3.5px 4.8px);"></div><div class="a" style="left:530px;top:249.25px;width:6px;height:1px;background:#bbb;"></div><div class="a" style="left:528px;top:252.25px;width:8px;height:1px;background:repeating-linear-gradient(90deg,#e6e6e6 0 3.5px,transparent 3.5px 4.8px);"></div><div class="a" style="left:486px;top:256.1px;width:1px;height:1.2px;background:#999;"></div><div class="a" style="left:488px;top:256.1px;width:38px;height:1px;background:repeating-linear-gradient(90deg,#bbbbbb 0 3.5px,transparent 3.5px 4.8px);"></div><div class="a" style="left:490px;top:259.1px;width:22px;height:1px;background:repeating-linear-gradient(90deg,#d0d0d0 0 3.5px,transparent 3.5px 4.8px);"></div><div class="a" style="left:530px;top:256.1px;width:6px;height:1px;background:#bbb;"></div><div class="a" style="left:528px;top:259.1px;width:8px;height:1px;background:repeating-linear-gradient(90deg,#e6e6e6 0 3.5px,transparent 3.5px 4.8px);"></div><div class="a" style="left:484px;top:261.75px;width:54px;height:6.8px;background:#f6f6f6;"></div><div class="a" style="left:486px;top:262.95px;width:1px;height:1.2px;background:#999;"></div><div class="a" style="left:488px;top:262.95px;width:38px;height:1px;background:repeating-linear-gradient(90deg,#bbbbbb 0 3.5px,transparent 3.5px 4.8px);"></div><div class="a" style="left:490px;top:265.95px;width:22px;height:1px;background:repeating-linear-gradient(90deg,#d0d0d0 0 3.5px,transparent 3.5px 4.8px);"></div><div class="a" style="left:530px;top:262.95px;width:6px;height:1px;background:#bbb;"></div><div class="a" style="left:528px;top:265.95px;width:8px;height:1px;background:repeating-linear-gradient(90deg,#e6e6e6 0 3.5px,transparent 3.5px 4.8px);"></div><div class="a" style="left:538.5px;top:210px;width:1px;height:12px;background:#ccc;"></div><div class="a" style="left:500px;top:267px;width:20px;height:1px;background:repeating-linear-gradient(90deg,#d4d4d4 0 3.5px,transparent 3.5px 4.8px);"></div><div class="a" style="left:381px;top:270px;width:158px;height:5.6px;background:#e08a35;"></div><div class="a" style="left:384px;top:272px;width:2px;height:1.2px;background:#f6dcc0;"></div><div class="a" style="left:389px;top:272px;width:2px;height:1.2px;background:#f6dcc0;"></div><div class="a" style="left:394px;top:272px;width:2px;height:1.2px;background:#f6dcc0;"></div><div class="a" style="left:411px;top:272px;width:2px;height:1.2px;background:#f6dcc0;"></div><div class="a" style="left:416px;top:272px;width:2px;height:1.2px;background:#f6dcc0;"></div><div class="a" style="left:423px;top:272px;width:2px;height:1.2px;background:#f6dcc0;"></div><div class="a" style="left:427px;top:272px;width:2px;height:1.2px;background:#f6dcc0;"></div><div class="a" style="left:434px;top:272px;width:2px;height:1.2px;background:#f6dcc0;"></div><div class="a" style="left:438px;top:272px;width:2px;height:1.2px;background:#f6dcc0;"></div><div class="a" style="left:443px;top:272px;width:2px;height:1.2px;background:#f6dcc0;"></div><div class="a" style="left:448px;top:272px;width:2px;height:1.2px;background:#f6dcc0;"></div><div class="a" style="left:454px;top:272px;width:2px;height:1.2px;background:#f6dcc0;"></div><div class="a" style="left:478px;top:272px;width:2px;height:1.2px;background:#f6dcc0;"></div><div class="a" style="left:483px;top:272px;width:2px;height:1.2px;background:#f6dcc0;"></div><div class="a" style="left:488px;top:272px;width:2px;height:1.2px;background:#f6dcc0;"></div><div class="a" style="left:493px;top:272px;width:2px;height:1.2px;background:#f6dcc0;"></div><div class="a" style="left:500px;top:272px;width:2px;height:1.2px;background:#f6dcc0;"></div><div class="a" style="left:510px;top:272px;width:2px;height:1.2px;background:#f6dcc0;"></div><div class="a" style="left:515px;top:272px;width:2px;height:1.2px;background:#f6dcc0;"></div><div class="a" style="left:520px;top:272px;width:2px;height:1.2px;background:#f6dcc0;"></div><div class="a" style="left:525px;top:272px;width:2px;height:1.2px;background:#f6dcc0;"></div><div class="a" style="left:530px;top:272px;width:2px;height:1.2px;background:#f6dcc0;"></div><div class="a" style="left:535px;top:272px;width:2px;height:1.2px;background:#f6dcc0;"></div><div class="a" style="left:560px;top:168px;width:160px;height:108px;background:#fff;border:1px solid #eec8a2;border-top-color:#e8e0d8"></div><div class="a" style="left:561px;top:169px;width:36.5px;height:93px;background:#f2f2f2;"></div><div class="a" style="left:562px;top:170px;width:3px;height:2px;background:#e3903a;"></div><div class="a" style="left:565px;top:170.2px;width:5px;height:1.6px;background:#8a8a8a;"></div><div class="a" style="left:594px;top:170.5px;width:2px;height:1.5px;background:#bbb;"></div><div class="a" style="left:567.6px;top:174px;width:22.4px;height:21.7px;background:radial-gradient(ellipse 18% 42% at 55% 88%,#1c1c1c 0,#1c1c1c 55%,transparent 100%),radial-gradient(circle at 28% 28%,#f2c89a 0,transparent 22%),radial-gradient(circle at 72% 22%,#f3dcc4 0,transparent 20%),radial-gradient(circle at 45% 50%,#e8b888 0,transparent 18%),radial-gradient(circle at 80% 60%,#e0c0a0 0,transparent 16%),linear-gradient(180deg,#a09890 0,#8a8480 60%,#5a5652 100%);"></div><div class="a" style="left:566px;top:198px;width:26px;height:1.3px;background:repeating-linear-gradient(90deg,#7a7a7a 0 3.5px,transparent 3.5px 4.8px);"></div><div class="a" style="left:570px;top:201px;width:18px;height:1px;background:repeating-linear-gradient(90deg,#bcbcbc 0 3.5px,transparent 3.5px 4.8px);"></div><div class="a" style="left:569px;top:203.5px;width:20px;height:1px;background:repeating-linear-gradient(90deg,#bcbcbc 0 3.5px,transparent 3.5px 4.8px);"></div><div class="a" style="left:570px;top:206px;width:18px;height:1px;background:repeating-linear-gradient(90deg,#bcbcbc 0 3.5px,transparent 3.5px 4.8px);"></div><div class="a" style="left:563px;top:209px;width:17px;height:7px;background:repeating-linear-gradient(90deg,#9a9a9a 0 1px,#cfcfcf 1px 1.6px);clip-path:polygon(0 50%,15% 0,40% 20%,70% 40%,100% 45%,100% 55%,70% 60%,40% 80%,15% 100%)"></div><div class="a" style="left:580px;top:212px;width:5px;height:1px;background:#ccc;"></div><div class="a" style="left:563px;top:221.0px;width:22px;height:1px;background:repeating-linear-gradient(90deg,#a2a2a2 0 3.5px,transparent 3.5px 4.8px);"></div><div class="a" style="left:563px;top:223.15px;width:30px;height:1px;background:repeating-linear-gradient(90deg,#bbbbbb 0 3.5px,transparent 3.5px 4.8px);"></div><div class="a" style="left:563px;top:225.3px;width:30px;height:1px;background:repeating-linear-gradient(90deg,#bbbbbb 0 3.5px,transparent 3.5px 4.8px);"></div><div class="a" style="left:563px;top:227.45px;width:22px;height:1px;background:repeating-linear-gradient(90deg,#bbbbbb 0 3.5px,transparent 3.5px 4.8px);"></div><div class="a" style="left:563px;top:229.6px;width:30px;height:1px;background:repeating-linear-gradient(90deg,#a2a2a2 0 3.5px,transparent 3.5px 4.8px);"></div><div class="a" style="left:563px;top:231.75px;width:30px;height:1px;background:repeating-linear-gradient(90deg,#bbbbbb 0 3.5px,transparent 3.5px 4.8px);"></div><div class="a" style="left:563px;top:233.9px;width:22px;height:1px;background:repeating-linear-gradient(90deg,#bbbbbb 0 3.5px,transparent 3.5px 4.8px);"></div><div class="a" style="left:563px;top:236.05px;width:30px;height:1px;background:repeating-linear-gradient(90deg,#bbbbbb 0 3.5px,transparent 3.5px 4.8px);"></div><div class="a" style="left:563px;top:238.2px;width:30px;height:1px;background:repeating-linear-gradient(90deg,#a2a2a2 0 3.5px,transparent 3.5px 4.8px);"></div><div class="a" style="left:563px;top:240.35px;width:22px;height:1px;background:repeating-linear-gradient(90deg,#bbbbbb 0 3.5px,transparent 3.5px 4.8px);"></div><div class="a" style="left:563px;top:242.5px;width:30px;height:1px;background:repeating-linear-gradient(90deg,#bbbbbb 0 3.5px,transparent 3.5px 4.8px);"></div><div class="a" style="left:563px;top:244.65px;width:30px;height:1px;background:repeating-linear-gradient(90deg,#bbbbbb 0 3.5px,transparent 3.5px 4.8px);"></div><div class="a" style="left:563px;top:246.8px;width:22px;height:1px;background:repeating-linear-gradient(90deg,#a2a2a2 0 3.5px,transparent 3.5px 4.8px);"></div><div class="a" style="left:563px;top:248.95px;width:30px;height:1px;background:repeating-linear-gradient(90deg,#bbbbbb 0 3.5px,transparent 3.5px 4.8px);"></div><div class="a" style="left:576px;top:259px;width:1.5px;height:1.5px;background:#bbb;"></div><div class="a" style="left:579px;top:259px;width:1.5px;height:1.5px;background:#e3903a;"></div><div class="a" style="left:597.5px;top:169px;width:1px;height:93px;background:#e6e6e6;"></div><div class="a" style="left:598px;top:169px;width:27px;height:93px;background:#f8f8f8;"></div><div class="a" style="left:599px;top:176px;width:16px;height:1px;background:repeating-linear-gradient(90deg,#f3c79b 0 3.5px,transparent 3.5px 4.8px);"></div><div class="a" style="left:599px;top:178px;width:16px;height:0.8px;background:#f2c496;"></div><div class="a" style="left:619px;top:176px;width:11px;height:1px;background:repeating-linear-gradient(90deg,#d4d4d4 0 3.5px,transparent 3.5px 4.8px);"></div><div class="a" style="left:633px;top:176px;width:12px;height:1px;background:repeating-linear-gradient(90deg,#d4d4d4 0 3.5px,transparent 3.5px 4.8px);"></div><div class="a" style="left:648px;top:176px;width:10px;height:1px;background:repeating-linear-gradient(90deg,#d4d4d4 0 3.5px,transparent 3.5px 4.8px);"></div><div class="a" style="left:679px;top:176px;width:8px;height:1px;background:repeating-linear-gradient(90deg,#f3c79b 0 3.5px,transparent 3.5px 4.8px);"></div><div class="a" style="left:690px;top:176px;width:22px;height:1px;background:repeating-linear-gradient(90deg,#d4d4d4 0 3.5px,transparent 3.5px 4.8px);"></div><div class="a" style="left:717px;top:176px;width:2px;height:1.2px;background:#bbb;"></div><div class="a" style="left:599px;top:182px;width:2px;height:1.2px;background:#999;"></div><div class="a" style="left:602px;top:182px;width:8px;height:1px;background:repeating-linear-gradient(90deg,#bcbcbc 0 3.5px,transparent 3.5px 4.8px);"></div><div class="a" style="left:622px;top:182px;width:2px;height:1px;background:#bbb;"></div><div class="a" style="left:599px;top:185.5px;width:6px;height:3px;background:#e3903a;"></div><div class="a" style="left:607px;top:186.5px;width:1px;height:1.5px;background:#bbb;"></div><div class="a" style="left:598px;top:192px;width:26px;height:4px;background:#f7d9b8;"></div><div class="a" style="left:603px;top:193.5px;width:12px;height:1px;background:repeating-linear-gradient(90deg,#e9bc8f 0 3.5px,transparent 3.5px 4.8px);"></div><div class="a" style="left:599.5px;top:197.0px;width:1.8px;height:1.8px;background:#444;"></div><div class="a" style="left:603px;top:197.4px;width:20px;height:1px;background:repeating-linear-gradient(90deg,#c4c4c4 0 3.5px,transparent 3.5px 4.8px);"></div><div class="a" style="left:599.5px;top:201.85px;width:1.8px;height:1.8px;background:#444;"></div><div class="a" style="left:603px;top:202.25px;width:20px;height:1px;background:repeating-linear-gradient(90deg,#c4c4c4 0 3.5px,transparent 3.5px 4.8px);"></div><div class="a" style="left:599.5px;top:206.7px;width:1.8px;height:1.8px;background:#444;"></div><div class="a" style="left:603px;top:207.1px;width:20px;height:1px;background:repeating-linear-gradient(90deg,#c4c4c4 0 3.5px,transparent 3.5px 4.8px);"></div><div class="a" style="left:599.5px;top:211.55px;width:1.8px;height:1.8px;background:#444;"></div><div class="a" style="left:603px;top:211.95000000000002px;width:20px;height:1px;background:repeating-linear-gradient(90deg,#c4c4c4 0 3.5px,transparent 3.5px 4.8px);"></div><div class="a" style="left:599.5px;top:216.4px;width:1.8px;height:1.8px;background:#444;"></div><div class="a" style="left:603px;top:216.8px;width:20px;height:1px;background:repeating-linear-gradient(90deg,#c4c4c4 0 3.5px,transparent 3.5px 4.8px);"></div><div class="a" style="left:599.5px;top:221.25px;width:1.8px;height:1.8px;background:#444;"></div><div class="a" style="left:603px;top:221.65px;width:20px;height:1px;background:repeating-linear-gradient(90deg,#c4c4c4 0 3.5px,transparent 3.5px 4.8px);"></div><div class="a" style="left:599.5px;top:226.1px;width:1.8px;height:1.8px;background:#444;"></div><div class="a" style="left:603px;top:226.5px;width:20px;height:1px;background:repeating-linear-gradient(90deg,#c4c4c4 0 3.5px,transparent 3.5px 4.8px);"></div><div class="a" style="left:599.5px;top:230.95px;width:1.8px;height:1.8px;background:#444;"></div><div class="a" style="left:603px;top:231.35px;width:20px;height:1px;background:repeating-linear-gradient(90deg,#c4c4c4 0 3.5px,transparent 3.5px 4.8px);"></div><div class="a" style="left:626px;top:182px;width:8px;height:1px;background:repeating-linear-gradient(90deg,#bcbcbc 0 3.5px,transparent 3.5px 4.8px);"></div><div class="a" style="left:641px;top:182px;width:9px;height:1px;background:repeating-linear-gradient(90deg,#bcbcbc 0 3.5px,transparent 3.5px 4.8px);"></div><div class="a" style="left:655px;top:182px;width:6px;height:1px;background:repeating-linear-gradient(90deg,#bcbcbc 0 3.5px,transparent 3.5px 4.8px);"></div><div class="a" style="left:669px;top:182px;width:5px;height:1px;background:repeating-linear-gradient(90deg,#bcbcbc 0 3.5px,transparent 3.5px 4.8px);"></div><div class="a" style="left:626.4px;top:187px;width:16.4px;height:16.5px;background:radial-gradient(ellipse 18% 42% at 55% 88%,#1c1c1c 0,#1c1c1c 55%,transparent 100%),radial-gradient(circle at 28% 28%,#f2c89a 0,transparent 22%),radial-gradient(circle at 72% 22%,#f3dcc4 0,transparent 20%),radial-gradient(circle at 45% 50%,#e8b888 0,transparent 18%),radial-gradient(circle at 80% 60%,#e0c0a0 0,transparent 16%),linear-gradient(180deg,#a09890 0,#8a8480 60%,#5a5652 100%);"></div><div class="a" style="left:626.4px;top:219px;width:16.4px;height:16.3px;background:radial-gradient(ellipse at 60% 35%,#e0e0e0 0,#8a8a8a 35%,#333 75%,#222 100%);"></div><div class="a" style="left:626.4px;top:205.0px;width:13px;height:1px;background:repeating-linear-gradient(90deg,#bcbcbc 0 3.5px,transparent 3.5px 4.8px);"></div><div class="a" style="left:626.4px;top:207.6px;width:13px;height:1px;background:repeating-linear-gradient(90deg,#c7c7c7 0 3.5px,transparent 3.5px 4.8px);"></div><div class="a" style="left:626.4px;top:210.2px;width:13px;height:1px;background:repeating-linear-gradient(90deg,#c7c7c7 0 3.5px,transparent 3.5px 4.8px);"></div><div class="a" style="left:626.4px;top:212.8px;width:13px;height:1px;background:repeating-linear-gradient(90deg,#dadada 0 3.5px,transparent 3.5px 4.8px);"></div><div class="a" style="left:626.4px;top:237.0px;width:13px;height:1px;background:repeating-linear-gradient(90deg,#c9c9c9 0 3.5px,transparent 3.5px 4.8px);"></div><div class="a" style="left:626.4px;top:239.6px;width:13px;height:1px;background:repeating-linear-gradient(90deg,#c7c7c7 0 3.5px,transparent 3.5px 4.8px);"></div><div class="a" style="left:626.4px;top:242.2px;width:13px;height:1px;background:repeating-linear-gradient(90deg,#c7c7c7 0 3.5px,transparent 3.5px 4.8px);"></div><div class="a" style="left:626.4px;top:244.8px;width:13px;height:1px;background:repeating-linear-gradient(90deg,#dadada 0 3.5px,transparent 3.5px 4.8px);"></div><div class="a" style="left:646px;top:187px;width:16px;height:16.5px;background:linear-gradient(180deg,transparent 70%,#2a2a2a 100%),linear-gradient(95deg,#2e2e2e 0,#505050 30%,#bdbdbd 70%,#eeeeee 100%);"></div><div class="a" style="left:646px;top:219px;width:16px;height:16.3px;background:radial-gradient(ellipse at 50% 50%,#4a4a4a 0,#222 50%,#121212 100%);"></div><div class="a" style="left:646px;top:205.0px;width:13px;height:1px;background:repeating-linear-gradient(90deg,#bcbcbc 0 3.5px,transparent 3.5px 4.8px);"></div><div class="a" style="left:646px;top:207.6px;width:13px;height:1px;background:repeating-linear-gradient(90deg,#c7c7c7 0 3.5px,transparent 3.5px 4.8px);"></div><div class="a" style="left:646px;top:210.2px;width:13px;height:1px;background:repeating-linear-gradient(90deg,#c7c7c7 0 3.5px,transparent 3.5px 4.8px);"></div><div class="a" style="left:646px;top:212.8px;width:13px;height:1px;background:repeating-linear-gradient(90deg,#dadada 0 3.5px,transparent 3.5px 4.8px);"></div><div class="a" style="left:646px;top:237.0px;width:13px;height:1px;background:repeating-linear-gradient(90deg,#c9c9c9 0 3.5px,transparent 3.5px 4.8px);"></div><div class="a" style="left:646px;top:239.6px;width:13px;height:1px;background:repeating-linear-gradient(90deg,#c7c7c7 0 3.5px,transparent 3.5px 4.8px);"></div><div class="a" style="left:646px;top:242.2px;width:13px;height:1px;background:repeating-linear-gradient(90deg,#c7c7c7 0 3.5px,transparent 3.5px 4.8px);"></div><div class="a" style="left:646px;top:244.8px;width:13px;height:1px;background:repeating-linear-gradient(90deg,#dadada 0 3.5px,transparent 3.5px 4.8px);"></div><div class="a" style="left:665px;top:187px;width:9.4px;height:16.5px;background:repeating-linear-gradient(90deg,#3a3a3a 0 3px,#6a6a6a 3px 5px),linear-gradient(#555,#333);"></div><div class="a" style="left:665px;top:219px;width:9.4px;height:16.3px;background:radial-gradient(ellipse at 55% 40%,#d0d0d0 0,#5a5a5a 30%,#262626 75%);"></div><div class="a" style="left:665px;top:205.0px;width:9.4px;height:1px;background:repeating-linear-gradient(90deg,#bcbcbc 0 3.5px,transparent 3.5px 4.8px);"></div><div class="a" style="left:665px;top:207.6px;width:9.4px;height:1px;background:repeating-linear-gradient(90deg,#c7c7c7 0 3.5px,transparent 3.5px 4.8px);"></div><div class="a" style="left:665px;top:210.2px;width:9.4px;height:1px;background:repeating-linear-gradient(90deg,#c7c7c7 0 3.5px,transparent 3.5px 4.8px);"></div><div class="a" style="left:665px;top:212.8px;width:9.4px;height:1px;background:repeating-linear-gradient(90deg,#dadada 0 3.5px,transparent 3.5px 4.8px);"></div><div class="a" style="left:665px;top:237.0px;width:9.4px;height:1px;background:repeating-linear-gradient(90deg,#c9c9c9 0 3.5px,transparent 3.5px 4.8px);"></div><div class="a" style="left:665px;top:239.6px;width:9.4px;height:1px;background:repeating-linear-gradient(90deg,#c7c7c7 0 3.5px,transparent 3.5px 4.8px);"></div><div class="a" style="left:665px;top:242.2px;width:9.4px;height:1px;background:repeating-linear-gradient(90deg,#c7c7c7 0 3.5px,transparent 3.5px 4.8px);"></div><div class="a" style="left:665px;top:244.8px;width:9.4px;height:1px;background:repeating-linear-gradient(90deg,#dadada 0 3.5px,transparent 3.5px 4.8px);"></div><div class="a" style="left:624px;top:252.5px;width:28px;height:1px;background:#bdbdbd;"></div><div class="a" style="left:640px;top:255.5px;width:16px;height:1px;background:repeating-linear-gradient(90deg,#dadada 0 3.5px,transparent 3.5px 4.8px);"></div><div class="a" style="left:600px;top:259px;width:18px;height:1px;background:repeating-linear-gradient(90deg,#d9d9d9 0 3.5px,transparent 3.5px 4.8px);"></div><div class="a" style="left:625px;top:259px;width:16px;height:1px;background:repeating-linear-gradient(90deg,#d9d9d9 0 3.5px,transparent 3.5px 4.8px);"></div><div class="a" style="left:656px;top:259px;width:2px;height:1.2px;background:#999;"></div><div class="a" style="left:661px;top:259px;width:2px;height:1.2px;background:#999;"></div><div class="a" style="left:666px;top:259px;width:2px;height:1.2px;background:#999;"></div><div class="a" style="left:672px;top:259px;width:2px;height:1.2px;background:#999;"></div><div class="a" style="left:676.5px;top:169px;width:1px;height:93px;background:#e8e8e8;"></div><div class="a" style="left:679px;top:182.5px;width:2px;height:1.2px;background:#999;"></div><div class="a" style="left:682px;top:182.5px;width:6px;height:1px;background:repeating-linear-gradient(90deg,#bcbcbc 0 3.5px,transparent 3.5px 4.8px);"></div><div class="a" style="left:703px;top:182.5px;width:13px;height:1px;background:repeating-linear-gradient(90deg,#c9c9c9 0 3.5px,transparent 3.5px 4.8px);"></div><div class="a" style="left:677px;top:185.8px;width:42px;height:6.9px;background:#e28d35;"></div><div class="a" style="left:680px;top:187px;width:32px;height:1px;background:repeating-linear-gradient(90deg,#f9e8d7 0 3.5px,transparent 3.5px 4.8px);"></div><div class="a" style="left:682px;top:189.8px;width:20px;height:1px;background:repeating-linear-gradient(90deg,#f9e8d7 0 3.5px,transparent 3.5px 4.8px);"></div><div class="a" style="left:677px;top:193.5px;width:42px;height:7px;background:#f7f7f7;"></div><div class="a" style="left:679px;top:195.0px;width:1px;height:1.2px;background:#999;"></div><div class="a" style="left:681px;top:195.0px;width:28px;height:1px;background:repeating-linear-gradient(90deg,#bbbbbb 0 3.5px,transparent 3.5px 4.8px);"></div><div class="a" style="left:683px;top:198.0px;width:20px;height:1px;background:repeating-linear-gradient(90deg,#d0d0d0 0 3.5px,transparent 3.5px 4.8px);"></div><div class="a" style="left:711px;top:195.0px;width:6px;height:1px;background:#bbb;"></div><div class="a" style="left:709px;top:198.0px;width:8px;height:1px;background:repeating-linear-gradient(90deg,#e6e6e6 0 3.5px,transparent 3.5px 4.8px);"></div><div class="a" style="left:679px;top:202.15px;width:1px;height:1.2px;background:#999;"></div><div class="a" style="left:681px;top:202.15px;width:28px;height:1px;background:repeating-linear-gradient(90deg,#bbbbbb 0 3.5px,transparent 3.5px 4.8px);"></div><div class="a" style="left:683px;top:205.15px;width:20px;height:1px;background:repeating-linear-gradient(90deg,#d0d0d0 0 3.5px,transparent 3.5px 4.8px);"></div><div class="a" style="left:711px;top:202.15px;width:6px;height:1px;background:#bbb;"></div><div class="a" style="left:709px;top:205.15px;width:8px;height:1px;background:repeating-linear-gradient(90deg,#e6e6e6 0 3.5px,transparent 3.5px 4.8px);"></div><div class="a" style="left:677px;top:207.8px;width:42px;height:7px;background:#f7f7f7;"></div><div class="a" style="left:679px;top:209.3px;width:1px;height:1.2px;background:#999;"></div><div class="a" style="left:681px;top:209.3px;width:28px;height:1px;background:repeating-linear-gradient(90deg,#bbbbbb 0 3.5px,transparent 3.5px 4.8px);"></div><div class="a" style="left:683px;top:212.3px;width:20px;height:1px;background:repeating-linear-gradient(90deg,#d0d0d0 0 3.5px,transparent 3.5px 4.8px);"></div><div class="a" style="left:711px;top:209.3px;width:6px;height:1px;background:#bbb;"></div><div class="a" style="left:709px;top:212.3px;width:8px;height:1px;background:repeating-linear-gradient(90deg,#e6e6e6 0 3.5px,transparent 3.5px 4.8px);"></div><div class="a" style="left:679px;top:216.45px;width:1px;height:1.2px;background:#999;"></div><div class="a" style="left:681px;top:216.45px;width:28px;height:1px;background:repeating-linear-gradient(90deg,#bbbbbb 0 3.5px,transparent 3.5px 4.8px);"></div><div class="a" style="left:683px;top:219.45px;width:20px;height:1px;background:repeating-linear-gradient(90deg,#d0d0d0 0 3.5px,transparent 3.5px 4.8px);"></div><div class="a" style="left:711px;top:216.45px;width:6px;height:1px;background:#bbb;"></div><div class="a" style="left:709px;top:219.45px;width:8px;height:1px;background:repeating-linear-gradient(90deg,#e6e6e6 0 3.5px,transparent 3.5px 4.8px);"></div><div class="a" style="left:677px;top:222.1px;width:42px;height:7px;background:#f7f7f7;"></div><div class="a" style="left:679px;top:223.6px;width:1px;height:1.2px;background:#999;"></div><div class="a" style="left:681px;top:223.6px;width:28px;height:1px;background:repeating-linear-gradient(90deg,#bbbbbb 0 3.5px,transparent 3.5px 4.8px);"></div><div class="a" style="left:683px;top:226.6px;width:20px;height:1px;background:repeating-linear-gradient(90deg,#d0d0d0 0 3.5px,transparent 3.5px 4.8px);"></div><div class="a" style="left:711px;top:223.6px;width:6px;height:1px;background:#bbb;"></div><div class="a" style="left:709px;top:226.6px;width:8px;height:1px;background:repeating-linear-gradient(90deg,#e6e6e6 0 3.5px,transparent 3.5px 4.8px);"></div><div class="a" style="left:679px;top:230.75px;width:1px;height:1.2px;background:#999;"></div><div class="a" style="left:681px;top:230.75px;width:28px;height:1px;background:repeating-linear-gradient(90deg,#bbbbbb 0 3.5px,transparent 3.5px 4.8px);"></div><div class="a" style="left:683px;top:233.75px;width:20px;height:1px;background:repeating-linear-gradient(90deg,#d0d0d0 0 3.5px,transparent 3.5px 4.8px);"></div><div class="a" style="left:711px;top:230.75px;width:6px;height:1px;background:#bbb;"></div><div class="a" style="left:709px;top:233.75px;width:8px;height:1px;background:repeating-linear-gradient(90deg,#e6e6e6 0 3.5px,transparent 3.5px 4.8px);"></div><div class="a" style="left:677px;top:236.4px;width:42px;height:7px;background:#f7f7f7;"></div><div class="a" style="left:679px;top:237.9px;width:1px;height:1.2px;background:#999;"></div><div class="a" style="left:681px;top:237.9px;width:28px;height:1px;background:repeating-linear-gradient(90deg,#bbbbbb 0 3.5px,transparent 3.5px 4.8px);"></div><div class="a" style="left:683px;top:240.9px;width:20px;height:1px;background:repeating-linear-gradient(90deg,#d0d0d0 0 3.5px,transparent 3.5px 4.8px);"></div><div class="a" style="left:711px;top:237.9px;width:6px;height:1px;background:#bbb;"></div><div class="a" style="left:709px;top:240.9px;width:8px;height:1px;background:repeating-linear-gradient(90deg,#e6e6e6 0 3.5px,transparent 3.5px 4.8px);"></div><div class="a" style="left:679px;top:245.05px;width:1px;height:1.2px;background:#999;"></div><div class="a" style="left:681px;top:245.05px;width:28px;height:1px;background:repeating-linear-gradient(90deg,#bbbbbb 0 3.5px,transparent 3.5px 4.8px);"></div><div class="a" style="left:683px;top:248.05px;width:20px;height:1px;background:repeating-linear-gradient(90deg,#d0d0d0 0 3.5px,transparent 3.5px 4.8px);"></div><div class="a" style="left:711px;top:245.05px;width:6px;height:1px;background:#bbb;"></div><div class="a" style="left:709px;top:248.05px;width:8px;height:1px;background:repeating-linear-gradient(90deg,#e6e6e6 0 3.5px,transparent 3.5px 4.8px);"></div><div class="a" style="left:677px;top:250.7px;width:42px;height:7px;background:#f7f7f7;"></div><div class="a" style="left:679px;top:252.2px;width:1px;height:1.2px;background:#999;"></div><div class="a" style="left:681px;top:252.2px;width:28px;height:1px;background:repeating-linear-gradient(90deg,#bbbbbb 0 3.5px,transparent 3.5px 4.8px);"></div><div class="a" style="left:683px;top:255.2px;width:20px;height:1px;background:repeating-linear-gradient(90deg,#d0d0d0 0 3.5px,transparent 3.5px 4.8px);"></div><div class="a" style="left:711px;top:252.2px;width:6px;height:1px;background:#bbb;"></div><div class="a" style="left:709px;top:255.2px;width:8px;height:1px;background:repeating-linear-gradient(90deg,#e6e6e6 0 3.5px,transparent 3.5px 4.8px);"></div><div class="a" style="left:718.5px;top:190px;width:1px;height:18px;background:#ccc;"></div><div class="a" style="left:690px;top:255.5px;width:14px;height:1px;background:repeating-linear-gradient(90deg,#dadada 0 3.5px,transparent 3.5px 4.8px);"></div><div class="a" style="left:659px;top:259px;width:2px;height:1.2px;background:#aaa;"></div><div class="a" style="left:664px;top:259px;width:2px;height:1.2px;background:#aaa;"></div><div class="a" style="left:669px;top:259px;width:2px;height:1.2px;background:#aaa;"></div><div class="a" style="left:682px;top:259px;width:2px;height:1.2px;background:#aaa;"></div><div class="a" style="left:688px;top:259px;width:2px;height:1.2px;background:#aaa;"></div><div class="a" style="left:693px;top:259px;width:2px;height:1.2px;background:#aaa;"></div><div class="a" style="left:706px;top:259px;width:2px;height:1.2px;background:#aaa;"></div><div class="a" style="left:711px;top:259px;width:2px;height:1.2px;background:#aaa;"></div><div class="a" style="left:716px;top:259px;width:2px;height:1.2px;background:#aaa;"></div><div class="a" style="left:561px;top:262px;width:158px;height:13.5px;background:#e08a35;"></div><svg class="a" style="left:0;top:0" width="920" height="640"><circle cx="581.5" cy="267.8" r="3.6" fill="none" stroke="#fff" stroke-width="0.9"/><path d="M580.4 265.9 V269.7 L583.3 267.8Z" fill="#fff"/><rect x="564.5" y="267" width="2" height="2" fill="#fbe3cc"/><rect x="572.5" y="267" width="2" height="2" fill="#fbe3cc"/><rect x="589" y="267" width="2.4" height="2" fill="#fbe3cc"/><rect x="597" y="267" width="2" height="2" fill="#fbe3cc"/><rect x="573" y="272" width="1.5" height="1.2" fill="#f6cfa8"/><rect x="581" y="272" width="1.5" height="1.2" fill="#f6cfa8"/><rect x="589" y="272" width="1.5" height="1.2" fill="#f6cfa8"/></svg><div class="a" style="left:603px;top:263.5px;width:86px;height:9px;background:repeating-linear-gradient(90deg,#f8dcc0 0 1.5px,#e9a86a 1.5px 2.2px);clip-path:polygon(0 50%,4% 20%,10% 35%,16% 5%,24% 30%,32% 10%,42% 35%,52% 15%,62% 35%,72% 10%,82% 30%,92% 15%,100% 35%,100% 65%,92% 85%,82% 70%,72% 90%,62% 65%,52% 85%,42% 65%,32% 90%,24% 70%,16% 95%,10% 65%,4% 80%,0 50%)"></div><div class="a" style="left:603px;top:273px;width:3px;height:1px;background:#f6cfa8;"></div><div class="a" style="left:685px;top:273px;width:3px;height:1px;background:#f6cfa8;"></div><div class="a" style="left:697px;top:265px;width:2px;height:1.5px;background:#fbe3cc;"></div><div class="a" style="left:702px;top:265px;width:3px;height:2px;background:#fff;"></div><div class="a" style="left:706px;top:265px;width:10px;height:1px;background:#f2b878;"></div><div class="a" style="left:716.5px;top:265px;width:1.5px;height:1.5px;background:#fbe3cc;"></div><div class="a" style="left:716.5px;top:269px;width:1.5px;height:1.5px;background:#fbe3cc;"></div><div class="a" style="left:716.5px;top:273px;width:1.5px;height:1.5px;background:#fbe3cc;"></div><!--/THUMBS-->
<div class="t h" style="left:184px;top:143px;font-size:13px;color:#cfcfcf">Вид:</div>
<div class="t" style="left:243.7px;top:280px;font-size:11px;letter-spacing:0.12px;color:#cfcfcf">Классический</div>
<div class="t" style="left:424.4px;top:280px;font-size:11px;letter-spacing:0.13px;color:#cfcfcf">Стандартный</div>
<div class="t" style="left:602.8px;top:280px;font-size:11px;letter-spacing:0.2px;color:#cfcfcf">Современный</div>
<div class="t h" style="left:185px;top:317px;font-size:13px;color:#cfcfcf">Тема:</div>
<div class="t h" style="left:184.75px;top:422px;font-size:13px;letter-spacing:0.35px;color:#cfcfcf">Настройки:</div>
<svg class="a" style="left:0;top:0" width="920" height="640">
  <circle cx="203.5" cy="348.5" r="6.6" fill="#3c3c3c" stroke="#474747" stroke-width="1"/>
  <circle cx="203.5" cy="348.5" r="4.4" fill="#e3903a"/>
  <circle cx="203.5" cy="371.5" r="6.6" fill="#3a3a3a" stroke="#454545" stroke-width="1"/>
  <circle cx="203.5" cy="394.5" r="6.6" fill="#3a3a3a" stroke="#454545" stroke-width="1"/>
  <rect x="197.8" y="447.5" width="12" height="12.5" rx="2" fill="#3f3f3f"/>
  <path d="M198.8 453 L203.4 457.2 L209.2 449.6" fill="none" stroke="#e3903a" stroke-width="2.1"/>
  <rect x="197.8" y="467.5" width="12" height="12.5" rx="2" fill="#3f3f3f"/>
  <path d="M198.8 473 L203.4 477.2 L209.2 469.6" fill="none" stroke="#e3903a" stroke-width="2.1"/>
  <rect x="198.3" y="488" width="11" height="11.5" rx="2" fill="none" stroke="#4a4a4a" stroke-width="1.2"/>
</svg>
<div class="t" style="left:216.5px;top:343px;font-size:11px;letter-spacing:0.32px;color:#d4d4d4">Зависит от настроек программы</div>
<div class="t" style="left:216.5px;top:366px;font-size:11px;letter-spacing:0px;color:#d4d4d4">Светлая</div>
<div class="t" style="left:216.5px;top:389px;font-size:11px;letter-spacing:0px;color:#d4d4d4">Тёмная</div>
<div class="t" style="left:216.7px;top:448px;font-size:11px;letter-spacing:0.3px;color:#d4d4d4">Применять цвет акцента к панели управления</div>
<div class="t" style="left:216.7px;top:468px;font-size:11px;letter-spacing:0.38px;color:#d4d4d4">Применять цвет акцента к рамкам окон</div>
<div class="t" style="left:216.7px;top:488px;font-size:11px;letter-spacing:0.38px;color:#d4d4d4">Закругленные края окон</div>
<div class="t" style="left:491.3px;top:502px;font-size:9px;letter-spacing:0.05px;color:#c8c8c8">Не волнуйтесь, вы всегда сможете поменять настройки</div>
<div class="t" style="left:498.4px;top:513px;font-size:9px;letter-spacing:0.05px;color:#c8c8c8">отображения или вовсе вернуться на <span style="color:#e3903a;text-decoration:underline">старую обложку</span>.</div>
</body></html>
